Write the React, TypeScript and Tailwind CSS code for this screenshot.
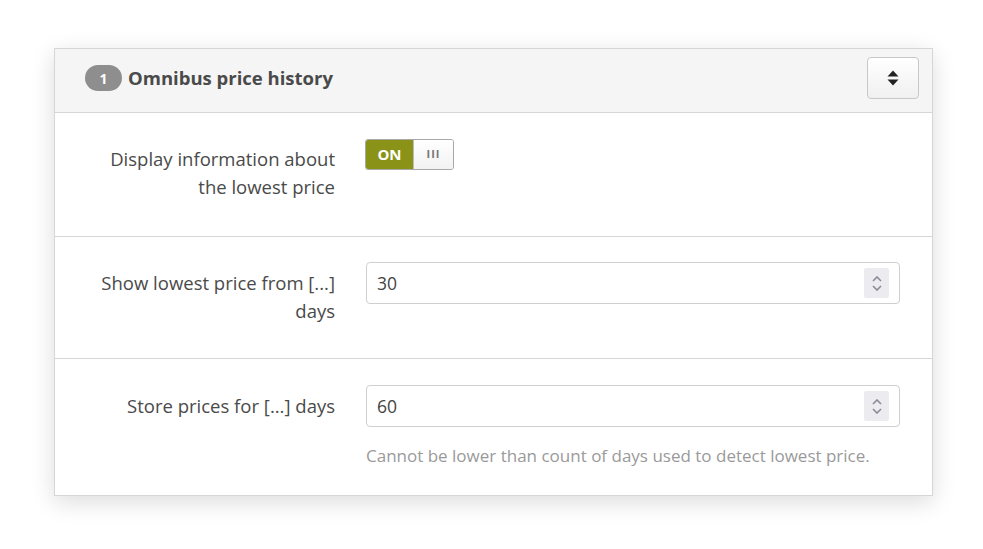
import React from "react";

function Spinner() {
  return (
    <div className="w-[25px] h-[30px] bg-[#ececf0] rounded-[2px] flex flex-col items-center justify-center gap-[3px]">
      <svg width="10" height="6" viewBox="0 0 10 6"><path d="M1 5 L5 1 L9 5" stroke="#8a8a96" strokeWidth="1.6" fill="none" /></svg>
      <svg width="10" height="6" viewBox="0 0 10 6"><path d="M1 1 L5 5 L9 1" stroke="#8a8a96" strokeWidth="1.6" fill="none" /></svg>
    </div>
  );
}

function NumInput({ value }: { value: string }) {
  return (
    <div className="h-[42px] border border-[#cfcfcf] rounded-[4px] bg-white flex items-center pl-[10px] pr-[10px]">
      <span className="flex-1 text-[17.5px] text-[#444]">{value}</span>
      <Spinner />
    </div>
  );
}

export default function App() {
  return (
    <div className="w-[983px] h-[549px] bg-white pt-[48px] pl-[54px]" style={{ fontFamily: '"Open Sans", sans-serif' }}>
      <div className="w-[879px] border border-[#d6d6d6] bg-white shadow-[0_6px_22px_rgba(0,0,0,0.14)]">
        <div className="h-[64px] bg-[#f5f5f5] border-b border-[#d6d6d6] flex items-start pt-[8px] pl-[30px] pr-[13px]">
          <div className="h-[42px] flex items-center">
            <span className="w-[37px] h-[26px] rounded-full bg-[#8e8e8e] text-white text-[14px] font-bold flex items-center justify-center">1</span>
            <span className="ml-[6px] text-[18.5px] font-bold text-[#4a4a4a]">Omnibus price history</span>
          </div>
          <div className="flex-1" />
          <button className="w-[52px] h-[42px] rounded-[4px] border border-[#c8c8c8] bg-gradient-to-b from-white to-[#f0f0f0] flex items-center justify-center">
            <svg width="12" height="16" viewBox="0 0 12 16">
              <path d="M6 0.5 L11.5 6.5 L0.5 6.5 Z" fill="#222" />
              <path d="M6 15.5 L11.5 9.5 L0.5 9.5 Z" fill="#222" />
            </svg>
          </button>
        </div>

        <div className="flex border-b border-[#d6d6d6] pt-[26px] pb-[35px] pr-[32px]">
          <div className="w-[280px] shrink-0 text-right text-[18.5px] leading-[28px] text-[#4a4a4a] pt-[6px] pl-[30px]">
            Display information about the lowest price
          </div>
          <div className="ml-[30px]">
            <div className="flex h-[31px] w-[89px] rounded-[3px] border border-[#a8a8a8] overflow-hidden">
              <div className="w-[47px] bg-[#8a9318] text-white font-bold text-[15px] flex items-center justify-center">ON</div>
              <div className="flex-1 bg-gradient-to-b from-white to-[#f2f2f2] border-l border-[#bdbdbd] flex items-center justify-center text-[#777] text-[11px] font-bold tracking-[1px]">III</div>
            </div>
          </div>
        </div>

        <div className="flex border-b border-[#d6d6d6] pt-[25px] pb-[33px] pr-[32px]">
          <div className="w-[280px] shrink-0 text-right text-[18.5px] leading-[28px] text-[#4a4a4a] pt-[7px] pl-[30px]">
            Show lowest price from [...] days
          </div>
          <div className="ml-[31px] flex-1">
            <NumInput value="30" />
          </div>
        </div>

        <div className="flex pt-[26px] pb-[29px] pr-[32px]">
          <div className="w-[280px] shrink-0 text-right text-[18.5px] leading-[28px] text-[#4a4a4a] pt-[7px] pl-[30px]">
            Store prices for [...] days
          </div>
          <div className="ml-[31px] flex-1">
            <NumInput value="60" />
            <div className="mt-[19px] text-[17px] leading-[20px] text-[#9a9a9a]">
              Cannot be lower than count of days used to detect lowest price.
            </div>
          </div>
        </div>
      </div>
    </div>
  );
}
